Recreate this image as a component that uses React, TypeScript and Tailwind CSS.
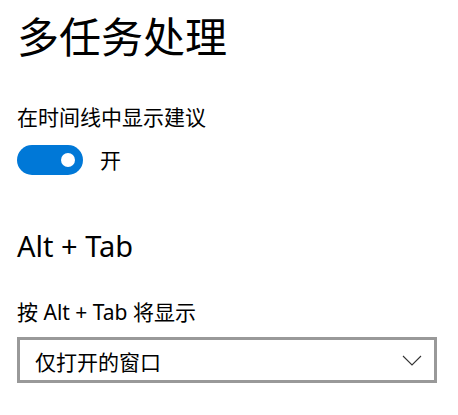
import React from "react";

export default function App() {
  const cjk = { fontFamily: '"Noto Sans", "Noto Sans CJK SC", sans-serif' };
  return (
    <div className="w-[458px] h-[415px] bg-white text-black pl-[17px] pr-[21px]" style={cjk}>
      <div className="pt-[11px] h-[66px] text-[42px] leading-[52px]">多任务处理</div>
      <div className="mt-[38px] text-[21px] leading-[26px]">在时间线中显示建议</div>
      <div className="mt-[15px] flex items-center gap-[17px]">
        <div className="w-[66px] h-[30px] rounded-full bg-[#0078d7] flex items-center justify-end pr-[8px]">
          <div className="w-[14px] h-[14px] rounded-full bg-white" />
        </div>
        <span className="text-[21px] leading-[30px]">开</span>
      </div>
      <div className="mt-[53px] text-[29px] leading-[36px]">Alt + Tab</div>
      <div className="mt-[35px] text-[21px] leading-[26px]">按 Alt + Tab 将显示</div>
      <div className="mt-[12px] h-[46px] border-[3px] border-[#999999] flex items-center justify-between pl-[15px] pr-[12px] pt-[4px]">
        <span className="text-[21px] leading-[26px]">仅打开的窗口</span>
        <svg className="mb-[4px]" width="20" height="11" viewBox="0 0 20 11" fill="none">
          <path d="M1 1 L10 10 L19 1" stroke="#333" strokeWidth="1.1" />
        </svg>
      </div>
    </div>
  );
}
